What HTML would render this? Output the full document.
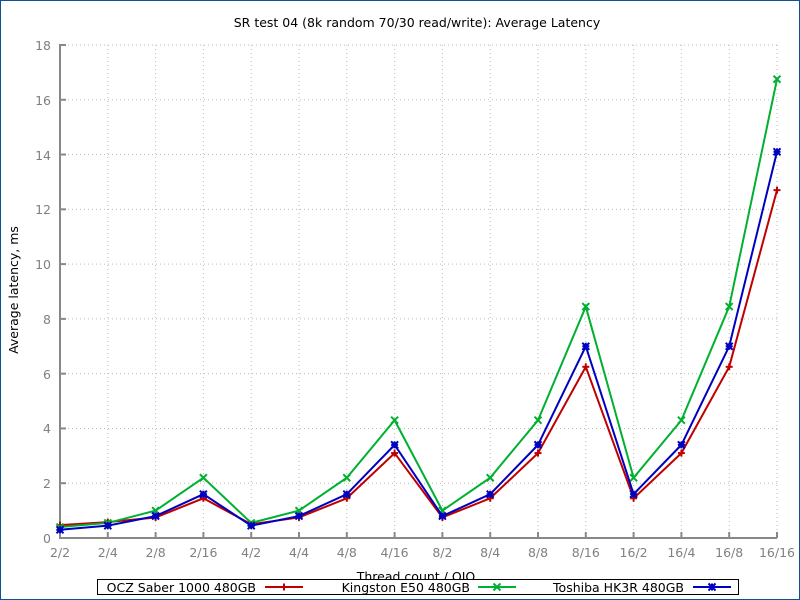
<!DOCTYPE html>
<html><head><meta charset="utf-8"><style>
html,body{margin:0;padding:0;background:#fff}
svg{display:block}
text{font-family:"DejaVu Sans","Liberation Sans",sans-serif;font-size:12.5px}
</style></head><body>
<svg id="s" width="800" height="600" xmlns="http://www.w3.org/2000/svg">
<rect x="0.5" y="0.5" width="799" height="599" fill="#fff" stroke="#0b5394" stroke-width="1"/>
<g id="grid" stroke="#bbb" stroke-width="1" stroke-dasharray="1,3"></g>
<g id="ax" stroke="#888" stroke-width="2" fill="none"></g>
<g fill="#808080" text-anchor="end">
<text x="51" y="543">0</text><text x="51" y="488">2</text><text x="51" y="433">4</text><text x="51" y="379">6</text><text x="51" y="324">8</text><text x="51" y="269">10</text><text x="51" y="214">12</text><text x="51" y="160">14</text><text x="51" y="105">16</text><text x="51" y="50">18</text>
</g>
<g fill="#808080" text-anchor="middle">
<text x="60" y="557">2/2</text><text x="107.8" y="557">2/4</text><text x="155.6" y="557">2/8</text><text x="203.4" y="557">2/16</text><text x="251.2" y="557">4/2</text><text x="299" y="557">4/4</text><text x="346.8" y="557">4/8</text><text x="394.6" y="557">4/16</text><text x="442.4" y="557">8/2</text><text x="490.2" y="557">8/4</text><text x="538" y="557">8/8</text><text x="585.8" y="557">8/16</text><text x="633.6" y="557">16/2</text><text x="681.4" y="557">16/4</text><text x="729.2" y="557">16/8</text><text x="777" y="557">16/16</text>
</g>
<text x="417" y="27" text-anchor="middle">SR test 04 (8k random 70/30 read/write): Average Latency</text>
<text x="416" y="581" text-anchor="middle">Thread count / OIO</text>
<text transform="translate(18,290) rotate(-90)" text-anchor="middle">Average latency, ms</text>
<g id="data"></g>
<rect x="97.5" y="579.5" width="641" height="15" fill="#fff" stroke="#000" stroke-width="1"/>
<g text-anchor="end">
<text x="256" y="592">OCZ Saber 1000 480GB</text>
<text x="470" y="592">Kingston E50 480GB</text>
<text x="684" y="592">Toshiba HK3R 480GB</text>
</g>
<g id="leg"></g>
</svg>
<script>
var ns="http://www.w3.org/2000/svg";
function el(p,t,a){var e=document.createElementNS(ns,t);for(var k in a)e.setAttribute(k,a[k]);p.appendChild(e);return e;}
var X=function(i){return 60+i*47.8},Y=function(v){return 538-27.39*v};
var g=document.getElementById('grid'),ax=document.getElementById('ax');
for(var v=2;v<=18;v+=2)el(g,'line',{x1:60,x2:777,y1:Y(v),y2:Y(v)});
for(var i=1;i<16;i++)el(g,'line',{x1:X(i),x2:X(i),y1:45,y2:538});
el(ax,'polyline',{points:"66,45 60,45 60,538 777,538"});
for(var v=2;v<=16;v+=2)el(ax,'line',{x1:60,x2:66,y1:Y(v),y2:Y(v)});
for(var i=1;i<16;i++)el(ax,'line',{x1:X(i),x2:X(i),y1:538,y2:532});
var S=[
{c:"#c00000",m:"+",d:[0.47,0.58,0.75,1.45,0.5,0.75,1.45,3.1,0.75,1.45,3.1,6.25,1.45,3.1,6.25,12.7]},
{c:"#00b030",m:"x",d:[0.4,0.55,1.0,2.2,0.55,1.0,2.2,4.3,1.0,2.2,4.3,8.45,2.2,4.3,8.45,16.75]},
{c:"#0000c0",m:"*",d:[0.3,0.45,0.8,1.6,0.45,0.8,1.6,3.4,0.8,1.6,3.4,7.0,1.6,3.4,7.0,14.1]}];
var D=document.getElementById('data'),L=document.getElementById('leg');
function mk(p,x,y,m,c){var a={stroke:c,'stroke-width':2};var r=3.5;
 if(m=="+"||m=="*"){el(p,'line',Object.assign({x1:x-r,x2:x+r,y1:y,y2:y},a));el(p,'line',Object.assign({x1:x,x2:x,y1:y-r,y2:y+r},a));}
 if(m=="x"||m=="*"){el(p,'line',Object.assign({x1:x-r,x2:x+r,y1:y-r,y2:y+r},a));el(p,'line',Object.assign({x1:x-r,x2:x+r,y1:y+r,y2:y-r},a));}}
S.forEach(function(s,k){var pts=s.d.map(function(v,i){return X(i)+","+Y(v)}).join(" ");
 el(D,'polyline',{points:pts,fill:"none",stroke:s.c,'stroke-width':2});
 s.d.forEach(function(v,i){mk(D,X(i),Y(v),s.m,s.c)});
 var lx=[265,478,693][k];el(L,'line',{x1:lx,x2:lx+38,y1:587,y2:587,stroke:s.c,'stroke-width':2});mk(L,lx+19,587,s.m,s.c);});
</script>
</body></html>
